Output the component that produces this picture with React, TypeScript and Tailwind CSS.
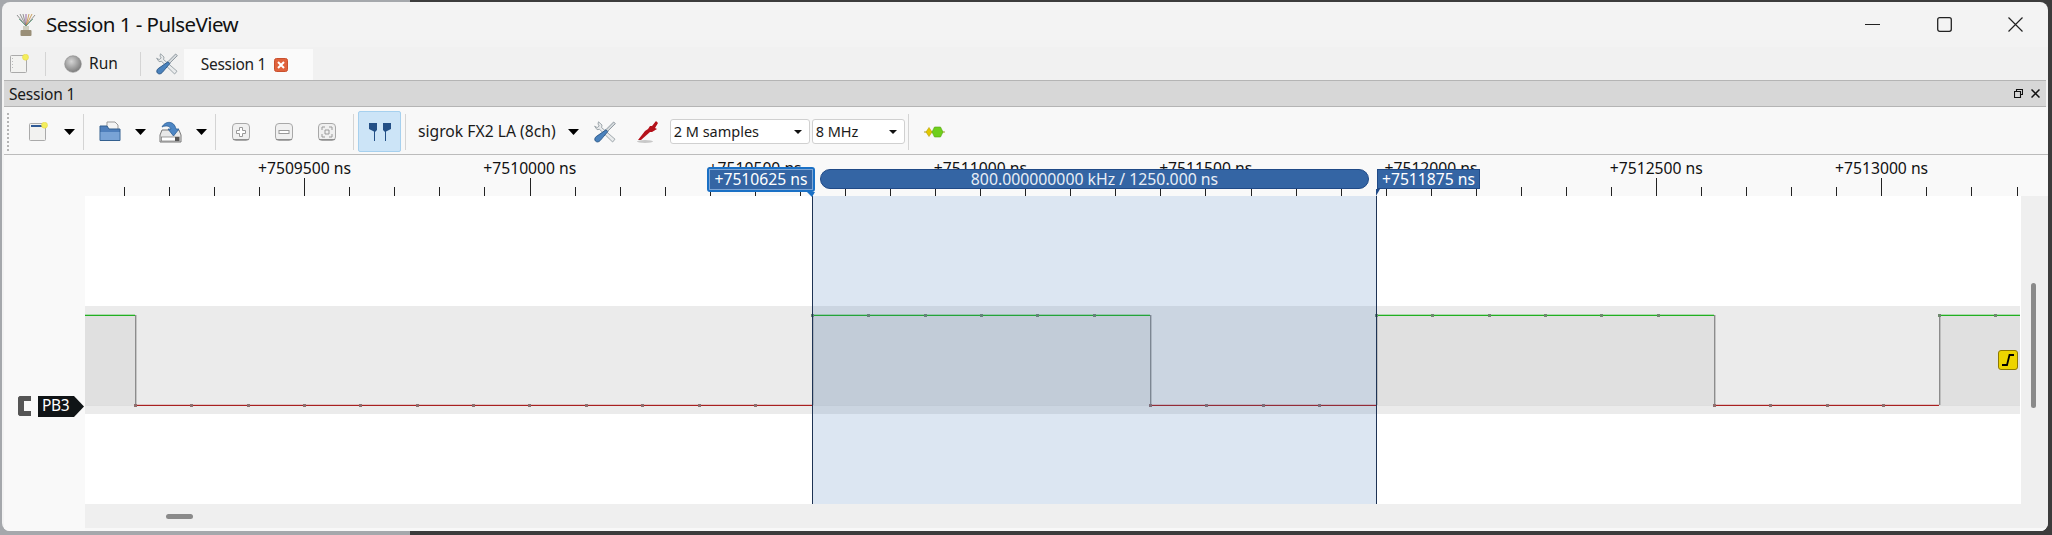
import React from "react";

const majors = [
  { x: 304.5, t: "+7509500 ns" },
  { x: 529.8, t: "+7510000 ns" },
  { x: 755.1, t: "+7510500 ns" },
  { x: 980.4, t: "+7511000 ns" },
  { x: 1205.7, t: "+7511500 ns" },
  { x: 1431, t: "+7512000 ns" },
  { x: 1656.3, t: "+7512500 ns" },
  { x: 1881.6, t: "+7513000 ns" },
];

const ticks: { x: number; major: boolean }[] = [];
for (let i = 0; i < 43; i++) {
  ticks.push({ x: Math.round(124 + i * 45.06), major: (i + 1) % 5 === 0 });
}

const OFF = 85;

const highs: [number, number][] = [
  [85, 135],
  [812, 1150],
  [1376, 1714],
  [1939, 2020],
];
const lows: [number, number][] = [
  [135, 812],
  [1150, 1376],
  [1714, 1939],
];

function dots(a: number, b: number) {
  const out: number[] = [];
  for (let x = a; x < b - 10; x += 56.35) out.push(Math.round(x));
  return out;
}

function Tools({ className }: { className: string }) {
  return (
    <svg viewBox="0 0 22 22" className={className}>
      <path d="M4.5 0.8 L8 4 L7.6 6.6 L21 18.2 L18.6 21 L5.6 8.4 L3 8.6 L0.6 5.2 L3.2 6.6 L5.2 5 L4 3 Z" fill="#e9ebec" stroke="#8a949b" strokeWidth="0.8" />
      <path d="M19.6 1 L21.4 2.6 L13.6 10.4 L11.8 8.8 Z" fill="#d5dadd" stroke="#7d8890" strokeWidth="0.8" />
      <path d="M12 8.8 L13.8 10.6 L6.2 19.6 C4.6 21.4 2.6 21.2 1.4 20 C0.4 18.8 0.6 17 2.2 15.6 Z" fill="#4a82bd" stroke="#2a5685" strokeWidth="0.9" />
    </svg>
  );
}

function Arrow({ className }: { className: string }) {
  return (
    <svg viewBox="0 0 11 6" className={className}>
      <path d="M0 0 H11 L5.5 6 Z" fill="#000" />
    </svg>
  );
}

function NewIcon({ bar }: { bar: boolean }) {
  return (
    <svg viewBox="0 0 19 20" className="w-[19px] h-[20px]">
      <rect x="0.5" y="1.5" width="16" height="17" rx="1" fill="#f2f2f0" stroke="#aaa" />
      {bar ? <rect x="2" y="3" width="13" height="2" fill="#2f5a96" /> : <path d="M2.5 4v12" stroke="#bbb" strokeDasharray="1 2" />}
      <circle cx="15.5" cy="3.2" r="3" fill="#f3ee5c" stroke="#e9d94a" strokeWidth="0.6" />
    </svg>
  );
}

function ZoomIcon({ kind }: { kind: "plus" | "minus" | "fit" }) {
  return (
    <svg viewBox="0 0 18 18" className="w-[18px] h-[18px]">
      <rect x="0.5" y="0.5" width="17" height="17" rx="3.5" fill="#f0f0f0" stroke="#a8a8a8" />
      <path d="M1 16.5h16" stroke="#8f8f8f" strokeWidth="1" />
      {kind === "plus" && <path d="M7.5 4.5h3v3h3v3h-3v3h-3v-3h-3v-3h3z" fill="#fff" stroke="#9a9a9a" />}
      {kind === "minus" && <rect x="4" y="7.5" width="10" height="3" fill="#fff" stroke="#9a9a9a" />}
      {kind === "fit" && <path d="M4 7V4h3M11 4h3v3M4 11v3h3M14 11v3h-3M7 7h4v4H7z" fill="none" stroke="#9a9a9a" />}
    </svg>
  );
}

function Sep({ className }: { className: string }) {
  return <div className={"w-px bg-[#d4d4d4] shrink-0 " + className} />;
}

function Combo({ w, text, ml }: { w: string; text: string; ml: string }) {
  return (
    <div className={"h-[25px] shrink-0 flex items-center justify-between bg-white border border-[#d0d0d0] rounded-[3px] pl-[3px] pr-[7px] text-[14.5px] " + w + " " + ml}>
      <span>{text}</span>
      <svg viewBox="0 0 8 4" className="w-[8px] h-[4px]">
        <path d="M0 0H8L4 4Z" fill="#111" />
      </svg>
    </div>
  );
}

export default function App() {
  return (
    <div
      className="relative w-[2052px] h-[535px] overflow-hidden pt-[2px] pl-[2px] pr-[4px] pb-[4px] bg-[linear-gradient(90deg,#a5a8ac_0%,#a5a8ac_20%,#3c3c3c_20%,#3c3c3c_100%)] text-[15.5px] leading-none text-[#1a1a1a]"
      style={{ fontFamily: '"Noto Sans", "Liberation Sans", sans-serif' }}
    >
      <div className="h-[529px] rounded-[8px] overflow-hidden bg-[#f3f3f3] flex flex-col">
        {/* Title bar */}
        <div className="h-[45px] shrink-0 flex items-center pl-[13px]">
          <svg viewBox="0 0 22 24" className="w-[22px] h-[24px]">
            <path d="M11 13L2 2M11 13L5 1M11 13L8 1" stroke="#777" strokeWidth="0.8" />
            <path d="M11 13L11 1" stroke="#8a5a9a" strokeWidth="0.9" />
            <path d="M11 13L14 1M11 13L17 1" stroke="#c08a3a" strokeWidth="0.8" />
            <path d="M11 13L20 2" stroke="#777" strokeWidth="0.8" />
            <path d="M11 13L4 6M11 13L18 6" stroke="#5a9a7a" strokeWidth="0.8" />
            <rect x="8" y="13" width="6" height="4" fill="#cfcfc0" />
            <rect x="5.5" y="17" width="11" height="6" rx="1" fill="#9a8f78" />
          </svg>
          <span className="ml-[9px] text-[20.5px] tracking-[-0.55px] text-[#111]">Session 1 - PulseView</span>
          <div className="ml-auto flex items-center">
            <svg viewBox="0 0 15 15" className="w-[15px] h-[15px]">
              <path d="M0 7.5H15" stroke="#222" strokeWidth="1.2" />
            </svg>
            <svg viewBox="0 0 15 15" className="w-[15px] h-[15px] ml-[57px]">
              <rect x="0.7" y="0.7" width="13.6" height="13.6" rx="2" fill="none" stroke="#222" strokeWidth="1.3" />
            </svg>
            <svg viewBox="0 0 15 15" className="w-[15px] h-[15px] ml-[56px] mr-[25px]">
              <path d="M0.5 0.5L14.5 14.5M14.5 0.5L0.5 14.5" stroke="#222" strokeWidth="1.2" />
            </svg>
          </div>
        </div>

        {/* Session tab row */}
        <div className="h-[33px] shrink-0 flex items-center bg-[#f1f1f1]">
          <div className="ml-[8px]"><NewIcon bar={false} /></div>
          <Sep className="h-[24px] ml-[16px] bg-[#bdbdbd]" />
          <svg viewBox="0 0 18 18" className="w-[18px] h-[18px] ml-[18px]">
            <defs>
              <radialGradient id="ball" cx="40%" cy="35%" r="70%">
                <stop offset="0%" stopColor="#d5d5d5" />
                <stop offset="100%" stopColor="#777" />
              </radialGradient>
            </defs>
            <circle cx="9" cy="9" r="8.3" fill="url(#ball)" stroke="#8a8a8a" strokeWidth="0.6" />
          </svg>
          <span className="ml-[7px]">Run</span>
          <Sep className="h-[24px] ml-[22px] bg-[#bdbdbd]" />
          <Tools className="w-[22px] h-[22px] ml-[15px]" />
          <div className="h-[31px] w-[129px] ml-[6px] mt-[2px] bg-[#fafafa] flex items-center pl-[17px]">
            <span className="text-[#222] text-[15.5px] tracking-[-0.3px]">Session 1</span>
            <svg viewBox="0 0 14 14" className="w-[14px] h-[14px] ml-[8px]">
              <rect x="0.5" y="0.5" width="13" height="13" rx="2" fill="#e0623c" stroke="#c9502e" />
              <path d="M4 4L10 10M10 4L4 10" stroke="#fff" strokeWidth="2" />
            </svg>
          </div>
        </div>

        {/* Dock title */}
        <div className="h-[27px] shrink-0 mx-[2px] bg-[#d7d7d7] border-y border-[#b4b4b4] flex items-center pl-[5px]">
          <span className="tracking-[-0.2px] pt-[3px]">Session 1</span>
          <div className="ml-auto flex items-center mr-[6px]">
            <svg viewBox="0 0 9 9" className="w-[9px] h-[9px]">
              <path d="M2.5 2.5V0.5H8.5V5.5H6.5M0.5 2.5H6.5V8.5H0.5Z" fill="none" stroke="#111" strokeWidth="1.1" />
            </svg>
            <svg viewBox="0 0 9 9" className="w-[9px] h-[9px] ml-[8px]">
              <path d="M0.5 0.5L8.5 8.5M8.5 0.5L0.5 8.5" stroke="#111" strokeWidth="1.5" />
            </svg>
          </div>
        </div>

        {/* Toolbar */}
        <div className="h-[48px] shrink-0 ml-[2px] pt-[2px] flex items-center bg-[#f8f8f8] border-b border-[#bcbcbc]">
          <div className="h-[38px] w-0 ml-[3px] border-l-2 border-dotted border-[#b5b5b5] shrink-0" />
          <div className="ml-[20px]"><NewIcon bar /></div>
          <Arrow className="w-[11px] h-[6px] ml-[16px] shrink-0" />
          <Sep className="h-[36px] ml-[8px]" />
          <svg viewBox="0 0 22 21" className="w-[22px] h-[21px] ml-[15px] shrink-0">
            <path d="M8 1H16L19 4V12H8Z" fill="#f4f4f4" stroke="#999" />
            <path d="M1 5H8L10 8H21V19.5H1Z" fill="#4f7fbc" stroke="#34608f" />
            <path d="M1.5 11H20.5V19H1.5Z" fill="#79a3d6" />
          </svg>
          <Arrow className="w-[11px] h-[6px] ml-[14px] shrink-0" />
          <svg viewBox="0 0 23 22" className="w-[23px] h-[22px] ml-[13px] shrink-0">
            <path d="M3 9L1 14V21H22V14L20 9Z" fill="#e8e8e8" stroke="#777" />
            <rect x="2.5" y="16" width="18" height="4" fill="#fff" stroke="#777" strokeWidth="0.7" />
            <rect x="16" y="16" width="4" height="4" fill="#555" />
            <path d="M3 6C6 0 15 -1 17 8H20L14.5 15L9 8H12C11 5 7 4 3 6Z" fill="#4d86c4" stroke="#2f5f96" strokeWidth="0.8" />
          </svg>
          <Arrow className="w-[11px] h-[6px] ml-[14px] shrink-0" />
          <Sep className="h-[36px] ml-[8px]" />
          <div className="ml-[16px] shrink-0"><ZoomIcon kind="plus" /></div>
          <div className="ml-[25px] shrink-0"><ZoomIcon kind="minus" /></div>
          <div className="ml-[25px] shrink-0"><ZoomIcon kind="fit" /></div>
          <Sep className="h-[36px] ml-[17px]" />
          <div className="w-[43px] h-[41px] ml-[4px] shrink-0 rounded-[2px] bg-[#cce4f7] border border-[#a6d0ee] flex items-center justify-center">
            <svg viewBox="0 0 22 18" className="w-[22px] h-[18px]">
              <path d="M0 0H8V7L6 9V18H5V8.5L0 6Z" fill="#234f86" />
              <path d="M22 0H14V7L16 9V18H17V8.5L22 6Z" fill="#234f86" />
            </svg>
          </div>
          <Sep className="h-[36px] ml-[4px]" />
          <span className="ml-[12px] text-[15.7px] shrink-0 whitespace-nowrap">sigrok FX2 LA (8ch)</span>
          <Arrow className="w-[11px] h-[6px] ml-[12px] shrink-0" />
          <Tools className="w-[22px] h-[22px] ml-[15px] shrink-0" />
          <svg viewBox="0 0 22 24" className="w-[22px] h-[24px] ml-[21px] shrink-0">
            <ellipse cx="8" cy="21.5" rx="8" ry="1.5" fill="#c8c8c8" />
            <path d="M1 20L8 11L11 9L13 6L15 6L19 1L21 3L18 8L20 9L15 12L13 12L4 20Z" fill="#b5121b" />
          </svg>
          <Combo w="w-[140px]" text="2 M samples" ml="ml-[11px]" />
          <Combo w="w-[93px]" text="8 MHz" ml="ml-[2px]" />
          <Sep className="h-[36px] ml-[3px]" />
          <svg viewBox="0 0 21 12" className="w-[21px] h-[12px] ml-[15px] shrink-0">
            <path d="M0 6H21" stroke="#a6a020" strokeWidth="1" />
            <path d="M2 6L5 1.5L8 6L5 10.5Z" fill="#e3c800" stroke="#b7a000" strokeWidth="0.6" />
            <path d="M8 6L10.5 1H16.5L19 6L16.5 11H10.5Z" fill="#6fcf1c" stroke="#55a512" strokeWidth="0.6" />
          </svg>
        </div>

        {/* Main */}
        <div className="flex-1 min-h-0 flex ml-[2px]">
          {/* Header column */}
          <div className="w-[81px] shrink-0 bg-[#f9f9f9] flex flex-col">
            <div className="h-[240px] shrink-0" />
            <div className="flex items-center h-[22px] pl-[14px]">
              <svg viewBox="0 0 13 20" className="w-[13px] h-[20px] shrink-0">
                <path d="M1.5 0H13V5H6V15H13V20H1.5L0 18.5V1.5Z" fill="#555" />
              </svg>
              <div className="ml-[7px] relative h-[21px] w-[36px] bg-[#101416] text-white flex items-center pl-[4px] text-[15.5px] tracking-[-0.3px]">
                PB3
              </div>
              <svg viewBox="0 0 10 21" className="w-[10px] h-[21px] shrink-0">
                <path d="M0 0L10 10.5L0 21Z" fill="#101416" />
              </svg>
            </div>
          </div>

          {/* Canvas column */}
          <div className="flex-1 min-w-0 flex flex-col bg-[#efefef] border-b-[3px] border-[#f8f8f8]">
            {/* Ruler */}
            <div className="relative h-[41px] shrink-0 bg-[#f9f9f9] overflow-visible z-10">
              <svg width="1965" height="41" className="absolute left-0 top-0">
                {ticks.map((t, i) => (
                  <rect key={i} x={t.x - OFF} y={t.major ? 23 : 32} width="1" height={t.major ? 18 : 9} fill="#222" />
                ))}
              </svg>
              {majors.map((m) => (
                <span
                  key={m.t}
                  className="absolute top-[6px] -translate-x-1/2 whitespace-nowrap text-[15.7px] text-[#111]"
                  style={{ left: m.x - OFF }}
                >
                  {m.t}
                </span>
              ))}
              {/* Left cursor flag */}
              <div className="absolute left-[622px] top-[12px] w-[108px] h-[25px] rounded-[3px] bg-[#1a70c5] p-[2px]">
                <div className="w-full h-full border border-[#7ea6d6] bg-[#3465a4] text-white text-[15.7px] flex items-center justify-center whitespace-nowrap pt-[1px]">
                  +7510625 ns
                </div>
              </div>
              <svg viewBox="0 0 8 5" className="absolute left-[722px] top-[37px] w-[8px] h-[5px]">
                <path d="M0 0H8L5 5Z" fill="#1a70c5" />
              </svg>
              {/* Measurement pill */}
              <div className="absolute left-[735px] top-[14px] w-[549px] h-[20px] rounded-[10px] bg-[#3465a4] border border-[#204a87] text-[#e8eef6] text-[15.8px] flex items-center justify-center whitespace-nowrap pt-[2px]">
                800.000000000 kHz / 1250.000 ns
              </div>
              {/* Right cursor flag */}
              <div className="absolute left-[1292px] top-[14px] w-[103px] h-[20px] bg-[#3465a4] border border-[#204a87] text-white text-[15.7px] flex items-center justify-center whitespace-nowrap pt-[2px]">
                +7511875 ns
              </div>
              <svg viewBox="0 0 4 7" className="absolute left-[1291px] top-[34px] w-[4px] h-[7px]">
                <path d="M0 7V0H4Z" fill="#204a87" />
              </svg>
            </div>

            {/* Traces */}
            <div className="h-[308px] w-[1936px] shrink-0 bg-white">
              <svg width="1936" height="308" className="block">
                <rect x="0" y="110" width="1935" height="108" fill="#ebebeb" />
                {highs.map(([a, b]) => (
                  <rect key={a} x={a - OFF} y="119" width={b - a} height="90" fill="#e0e0e0" />
                ))}
                <rect x="0" y="209" width="1935" height="1" fill="#dedede" />
                {[135, 812, 1150, 1376, 1714, 1939].map((x) => (
                  <rect key={x} x={x - OFF} y="119" width="1.4" height="90" fill="#8c8c8c" />
                ))}
                {highs.map(([a, b]) => (
                  <rect key={a} x={a - OFF} y="118.7" width={b - a} height="1.3" fill="#22b022" />
                ))}
                {lows.map(([a, b]) => (
                  <rect key={a} x={a - OFF} y="208.8" width={b - a} height="1.2" fill="#a82020" />
                ))}
                {highs.slice(1).flatMap(([a, b]) =>
                  dots(a, b).map((x) => <rect key={x} x={x - OFF - 1} y="118" width="3" height="3" fill="#6f8a6f" />)
                )}
                {lows.flatMap(([a, b]) =>
                  dots(a, b).map((x) => <rect key={x} x={x - OFF - 1} y="208" width="3" height="3" fill="#8f6f6f" />)
                )}
                <rect x={812 - OFF} y="0" width="564" height="308" fill="#316cb3" fillOpacity="0.17" />
                <rect x={812 - OFF} y="0" width="1" height="308" fill="#1e3354" />
                <rect x={1376 - OFF} y="0" width="1" height="308" fill="#1e3354" />
              </svg>
            </div>

            {/* Bottom scroll band */}
            <div className="relative flex-1">
              <div className="absolute left-[81px] top-[10px] w-[27px] h-[5px] rounded-full bg-[#8a8a8a]" />
            </div>
          </div>
        </div>
      </div>
      {/* Vertical scrollbar handle */}
      <div className="absolute left-[2031px] top-[283px] w-[5px] h-[125px] rounded-full bg-[#8a8a8a]" />
      {/* Conditions button */}
      <div className="absolute left-[1998px] top-[350px] w-[20px] h-[20px] rounded-[3px] bg-[#edd400] border border-[#8f7a00] flex items-center justify-center">
        <svg viewBox="0 0 14 14" className="w-[14px] h-[14px]">
          <path d="M1 12H6L8.5 2H13" fill="none" stroke="#000" strokeWidth="1.8" />
        </svg>
      </div>
    </div>
  );
}
